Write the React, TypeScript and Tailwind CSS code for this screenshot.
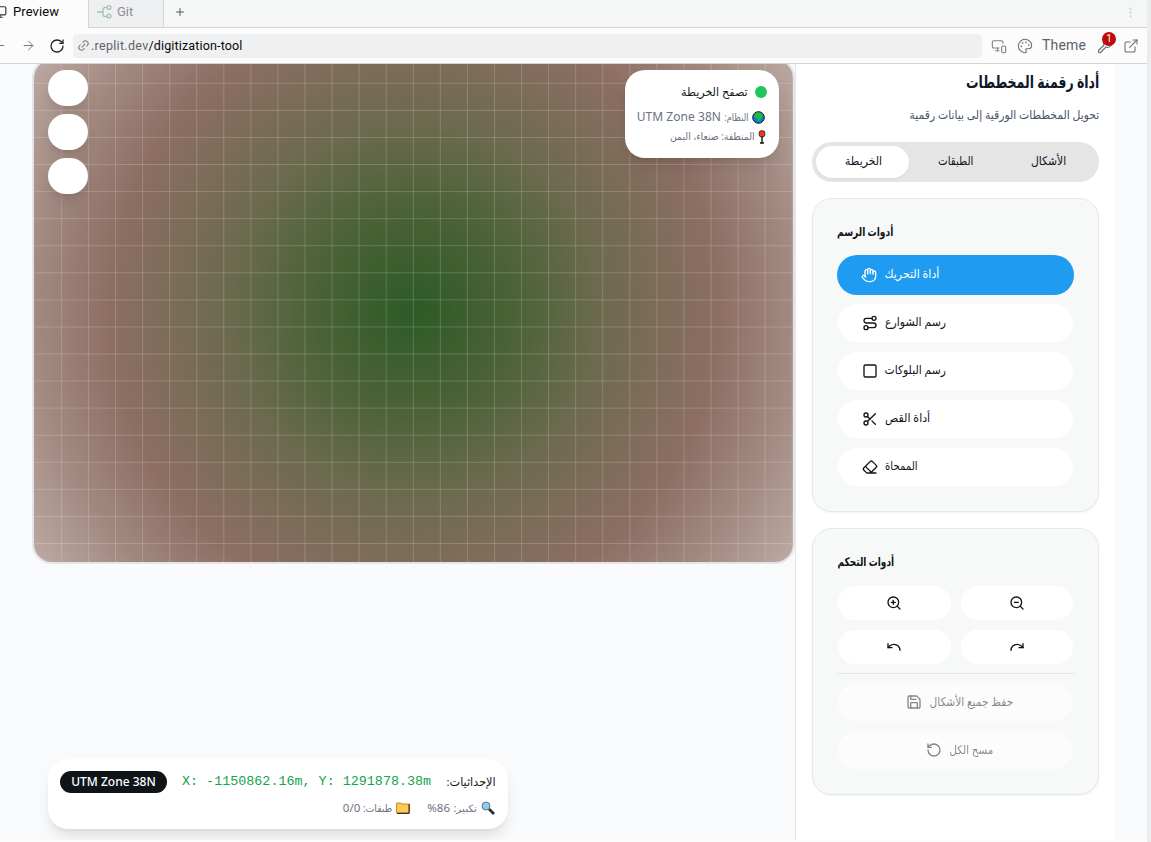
import React from 'react';
import { ArrowLeft, ArrowRight, RotateCw, Link2, Plus, MonitorSmartphone, Palette, Wrench, ExternalLink, Hand, Route, Square, Scissors, Eraser, ZoomIn, ZoomOut, Undo, Redo, Save, RotateCcw, Monitor, EllipsisVertical } from 'lucide-react';

const V_LINES = Array.from({ length: 28 }, (_, i) => (i + 1) * 27.07);
const H_LINES = Array.from({ length: 18 }, (_, i) => i * 27.07);

const TOOLS = [
  { label: 'رسم الشوارع', Icon: Route, w: 61 },
  { label: 'رسم البلوكات', Icon: Square, w: 61 },
  { label: 'أداة القص', Icon: Scissors, w: 45 },
  { label: 'الممحاة', Icon: Eraser, w: 33 },
];

function Ar({ text, w, size, bold = false }: { text: string; w: number; size: number; bold?: boolean }) {
  const ref = React.useRef<HTMLSpanElement>(null);
  const [scale, setScale] = React.useState(1);
  React.useLayoutEffect(() => {
    if (ref.current) setScale(w / ref.current.offsetWidth);
  }, [w]);
  return (
    <span dir="rtl" className="flex shrink-0 justify-center" style={{ width: w, fontSize: size }}>
      <span ref={ref} className={bold ? 'shrink-0 font-bold whitespace-nowrap' : 'shrink-0 whitespace-nowrap'} style={{ transform: `scaleX(${scale})` }}>{text}</span>
    </span>
  );
}

function GitIcon() {
  return (
    <svg width="16" height="16" viewBox="0 0 16 16" fill="none" stroke="#a5c3ad" strokeWidth="1.3">
      <path d="M1 8h6M11 3.5H9a2 2 0 0 0-2 2v5a2 2 0 0 0 2 2h2" />
      <circle cx="13" cy="3.5" r="1.9" /><circle cx="13" cy="12" r="1.9" />
    </svg>
  );
}

function Browser() {
  return (
    <header className="shrink-0 font-['Roboto','Noto_Sans',sans-serif]">
      <div className="flex h-7 bg-[#f5f7f6]">
        <div className="flex w-[88px] items-center overflow-hidden bg-[#fcfcfc] pb-1">
          <Monitor size={14} strokeWidth={2} className="-ml-[7px] shrink-0 text-[#333]" />
          <span className="ml-[6px] text-[13px] tracking-[0.1px] text-[#07080a]">Preview</span>
        </div>
        <div className="flex w-[76px] items-center border-x border-b border-[#d3d4d6] bg-[#eeeff1] pb-[3px] pl-[7px]">
          <GitIcon />
          <span className="ml-[5px] text-[13px] text-[#8c8f93]">Git</span>
        </div>
        <div className="flex flex-1 items-center border-b border-[#d3d4d6] pb-[3px] pl-[10px]">
          <Plus size={12} className="text-[#55585c]" />
          <EllipsisVertical size={13} className="mr-[10px] ml-auto text-[#cfd1d3]" />
        </div>
      </div>
      <div className="flex h-9 items-center border-b border-[#d3d4d6] bg-[#fcfcfc]">
        <ArrowLeft size={15} strokeWidth={1.6} className="-ml-2 shrink-0 text-[#777]" />
        <ArrowRight size={15} strokeWidth={1.6} className="ml-[14px] shrink-0 text-[#777]" />
        <RotateCw size={16} strokeWidth={1.9} className="ml-[13px] shrink-0 text-[#222]" />
        <div className="ml-2 flex h-6 w-[909px] shrink-0 items-center rounded-[4px] bg-[#eff0f2] pl-1">
          <Link2 size={13} strokeWidth={1.8} className="-rotate-45 text-[#777]" />
          <span className="ml-[1px] pt-px text-[12.5px] tracking-[0.3px] whitespace-nowrap text-[#5f6267]">.replit.dev<span className="tracking-[0.15px] text-[#07080a]">/digitization-tool</span></span>
        </div>
        <MonitorSmartphone size={16} strokeWidth={1.6} className="ml-[9px] shrink-0 text-[#7b7e82]" />
        <Palette size={16} strokeWidth={1.6} className="ml-[10px] shrink-0 text-[#6b6e72]" />
        <span className="ml-[9px] w-[45px] shrink-0 text-[14px] tracking-[0.2px] text-[#5f6267]">Theme</span>
        <div className="relative ml-[10px] shrink-0">
          <Wrench size={16} strokeWidth={1.7} className="text-[#6b6e72]" />
          <span className="absolute -top-[6px] left-[5px] flex h-[14px] w-[14px] items-center justify-center rounded-full bg-[#c00a0a] text-[10px] text-white">1</span>
        </div>
        <ExternalLink size={16} strokeWidth={1.6} className="ml-[10px] shrink-0 text-[#6b6e72]" />
      </div>
    </header>
  );
}

function MapView() {
  return (
    <div className="relative -mt-[6px] ml-8 h-[506px] w-[763px] shrink-0 overflow-hidden rounded-[20px] border-2 border-[#e3e5e9]">
      <div className="h-full w-full bg-[radial-gradient(circle_at_380px_249px,#2d5a27_0px,#4b6237_100px,#6b6a4e_185px,#7e6c59_250px,#8d6e63_304px,#a1887f_375px,#bcaaa4_456px)]">
        <svg className="block h-full w-full" stroke="#fff" strokeOpacity="0.18">
          {V_LINES.map((x) => <line key={x} x1={x + 0.3} x2={x + 0.3} y1="0" y2="502" />)}
          {H_LINES.map((y) => <line key={y} x1="0" x2="760" y1={y + 23.3} y2={y + 23.3} />)}
        </svg>
      </div>
      <div className="absolute top-[10px] left-[14px] flex flex-col gap-2">
        {[0, 1, 2].map((n) => <button key={n} className="h-9 w-10 rounded-[18px] bg-white shadow-lg" />)}
      </div>
      <div className="absolute top-[10px] right-[14px] flex h-[88px] w-[154px] flex-col items-end rounded-[20px] bg-white pt-[12px] pr-[12px] shadow-lg">
        <div className="flex h-5 items-center gap-[7px] text-[#15191d]"><Ar text="تصفح الخريطة" w={67} size={11.5} /><i className="h-3 w-3 rounded-full bg-[#22c55e]" /></div>
        <div className="mt-[5px] mr-[2px] flex h-5 items-center text-[#6b7280]">
          <span className="mr-[3px] text-[12px] tracking-[0.05px] whitespace-nowrap">UTM Zone 38N</span>
          <Ar text="النظام:" w={24} size={10} />
          <svg className="ml-[4px]" width="13" height="13" viewBox="0 0 13 13"><circle cx="6.5" cy="6.5" r="5.8" fill="#087be0" stroke="#111" /><path d="M3 2.5 5 1.5h3l3 2.5-1 2-1.5 2.5L6.5 11 5.5 7.5 2.5 6Z" fill="#20bd32" /></svg>
        </div>
        <div className="mr-[1px] flex h-[19px] items-center text-[#6b7280]">
          <Ar text="المنطقة: صنعاء، اليمن" w={85} size={10} />
          <svg className="ml-[3px]" width="8" height="14" viewBox="0 0 8 14"><path d="M4 6v7M2 13h4" stroke="#111" strokeWidth="1.4" /><rect x="1.2" y=".8" width="5.6" height="6" rx="2" fill="#f03a17" stroke="#111" strokeWidth=".8" /></svg>
        </div>
      </div>
    </div>
  );
}

function Coordinates() {
  return (
    <div className="mt-auto mb-[11px] ml-12 flex h-[70px] w-[460px] flex-col rounded-[20px] bg-white px-3 pt-3 shadow-lg">
      <div className="flex h-[22px] items-center justify-between">
        <span className="flex h-[22px] w-[107px] items-center justify-center rounded-full bg-[#0f1419] text-[12px] font-medium whitespace-nowrap text-white">UTM Zone 38N</span>
        <span className="ml-[15px] pt-px font-['Liberation_Mono',monospace] text-[13.4px] whitespace-pre text-[#16a34a]">X: -1150862.16m, Y: 1291878.38m</span>
        <span className="ml-auto text-[#15191d]"><Ar text="الإحداثيات:" w={49} size={11.5} /></span>
      </div>
      <div className="mt-[6px] flex h-[18px] items-center justify-end text-[11.5px] text-[#6b7280]">
        <span className="mr-[3px]">0/0</span><Ar text="طبقات:" w={29} size={10} />
        <svg className="ml-1" width="14" height="12" viewBox="0 0 14 12"><path d="M.5 1H5l1 1h7v9H.5Z" fill="#ffc85b" stroke="#ce8b19" /><path d="M13.2 2v9.3H1" fill="none" stroke="#111" /></svg>
        <span className="mr-[3px] ml-[17px]">%86</span><Ar text="تكبير:" w={24} size={10} />
        <svg className="mr-[1px] ml-1" width="14" height="14" viewBox="0 0 14 14"><path d="m8 8 5 5" stroke="#273238" strokeWidth="2.8" /><circle cx="5" cy="5" r="4" fill="#94c9ef" stroke="#58768b" /></svg>
      </div>
    </div>
  );
}

function Sidebar() {
  return (
    <aside className="flex w-[320px] shrink-0 flex-col border-l border-[#e3e5e9] bg-white px-4 pt-[6px]">
      <div className="flex h-6 items-center justify-end text-[#0f172a]"><Ar text="أداة رقمنة المخططات" w={133} size={17} bold /></div>
      <div className="mt-[11px] flex h-5 items-center justify-end text-[#475569]"><Ar text="تحويل المخططات الورقية إلى بيانات رقمية" w={190} size={12} /></div>
      <div className="mt-[17px] flex h-10 shrink-0 items-center rounded-full bg-[#e5e5e5] p-1 text-[#0f1419]">
        <div className="flex h-8 w-[93px] items-center justify-center rounded-full bg-white pb-[2px] pl-px shadow-xs"><Ar text="الخريطة" w={37} size={12} /></div>
        <div className="flex w-[93px] justify-center pb-[2px] pl-px"><Ar text="الطبقات" w={35} size={12} /></div>
        <div className="flex w-[93px] justify-center pb-[2px] pl-px"><Ar text="الأشكال" w={35} size={12} /></div>
      </div>
      <section className="mt-4 h-[314px] shrink-0 rounded-[20px] border border-[#e1eaef] bg-[#f7f9f8] px-6 pt-6 text-[#0f1419] shadow-xs">
        <div className="flex h-5 items-center pb-[2px]"><Ar text="أدوات الرسم" w={56} size={12} bold /></div>
        <button className="mt-3 flex h-10 w-[237px] items-center rounded-[20px] bg-[#1f9cf1] pl-6 text-white"><Hand size={16} /><span className="ml-[7px] pb-[2px]"><Ar text="أداة التحريك" w={55} size={12} /></span></button>
        <div className="mt-[9px] flex flex-col gap-[10px]">
          {TOOLS.map(({ label, Icon, w }) => <button key={label} className="ml-px flex h-[38px] w-[235px] items-center rounded-[19px] bg-white pl-6"><Icon size={16} /><span className="ml-[7px] pb-[2px]"><Ar text={label} w={w} size={12} /></span></button>)}
        </div>
      </section>
      <section className="mt-4 h-[267px] shrink-0 rounded-[20px] border border-[#e1eaef] bg-[#f7f9f8] px-6 pt-6 text-[#0f1419] shadow-xs">
        <div className="flex h-5 items-center pb-[2px]"><Ar text="أدوات التحكم" w={57} size={12} bold /></div>
        <div className="mt-[13px] ml-px grid w-[235px] grid-cols-2 gap-[10px]">
          {[ZoomIn, ZoomOut, Undo, Redo].map((Icon, i) => <button key={i} className="flex h-[34px] items-center justify-center rounded-[17px] bg-white"><Icon size={16} /></button>)}
        </div>
        <div className="mt-[9px] h-px bg-[#e5e7e8]" />
        <div className="mt-[9px] ml-px flex w-[235px] flex-col gap-[10px] opacity-50">
          <button className="flex h-[38px] items-center justify-center gap-[7px] rounded-[19px] bg-white pl-2"><Save size={16} /><Ar text="حفظ جميع الأشكال" w={84} size={12} /></button>
          <button className="flex h-[38px] items-center justify-center gap-[8px] rounded-[19px] bg-white pl-2"><RotateCcw size={16} /><Ar text="مسح الكل" w={44} size={12} /></button>
        </div>
      </section>
    </aside>
  );
}

export default function App() {
  return (
    <div className="flex h-[842px] w-[1151px] overflow-hidden bg-[#ebecee] font-['Noto_Sans','DejaVu_Sans',sans-serif]">
      <div className="flex w-[1147px] flex-col bg-[#f9fafc]">
        <Browser />
        <main className="flex h-[776px] overflow-hidden">
          <div className="flex w-[795px] shrink-0 flex-col"><MapView /><Coordinates /></div>
          <Sidebar />
        </main>
        <div className="h-0.5 bg-[#fcfcfc]" />
      </div>
    </div>
  );
}
